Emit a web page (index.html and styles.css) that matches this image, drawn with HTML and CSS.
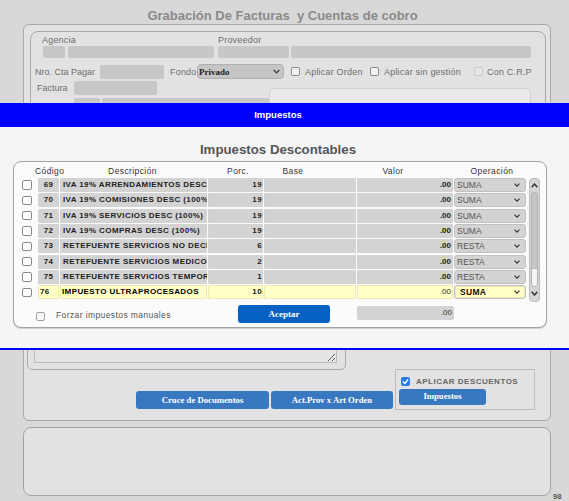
FILE: index.html
```html
<!DOCTYPE html>
<html lang="es">
<head>
<meta charset="utf-8">
<title>Grabación De Facturas</title>
<link rel="stylesheet" href="styles.css">
</head>
<body>
<div class="page">
  <div class="title">Grabación De Facturas&nbsp; y Cuentas de cobro</div>
  <div class="panel">
    <div class="fs1">
      <div class="lblrow"><span class="lbl-ag">Agencia</span><span class="lbl-pr">Proveedor</span></div>
      <div class="inrow"><span class="in in-ag1"></span><span class="in in-ag2"></span><span class="in in-pr1"></span><span class="in in-pr2"></span></div>
      <div class="row2">
        <span class="lbl w-nro">Nro. Cta Pagar</span><span class="in in-nro"></span>
        <span class="lbl w-fondo">Fondo</span>
        <span class="sel-privado">Privado<svg class="chev7" width="7" height="5" viewBox="0 0 7 5"><path d="M0.6 0.8 L3.5 3.8 L6.4 0.8" fill="none" stroke="#333" stroke-width="1.2"/></svg></span>
        <span class="chk chk1"></span><span class="lbl w-ord">Aplicar Orden</span>
        <span class="chk"></span><span class="lbl w-sin">Aplicar sin gestión</span>
        <span class="chk chk-dis"></span><span class="lbl lbl-dis">Con C.R.P</span>
      </div>
      <div class="row3">
        <div class="r3left">
          <div class="factrow"><span class="lbl w-fact">Factura</span><span class="in in-fact"></span></div>
          <div class="row4"><span class="in in-r4a"></span><span class="in in-r4b"></span></div>
        </div>
        <div class="rbox"></div>
      </div>
    </div>
    <div class="lower">
      <div class="fs2"><textarea class="obs"></textarea></div>
      <button class="btn btn-cruce">Cruce de Documentos</button>
      <button class="btn btn-act">Act.Prov x Art Orden</button>
      <div class="descbox">
        <div class="descrow">
          <span class="chk-on"><svg width="9" height="9" viewBox="0 0 9 9"><path d="M1.9 4.6 L3.8 6.5 L7.1 2.5" fill="none" stroke="#fff" stroke-width="1.4"/></svg></span>
          <span class="desclbl">APLICAR DESCUENTOS</span>
        </div>
        <button class="btn btn-imp">Impuestos</button>
      </div>
    </div>
  </div>
  <div class="bottomrow"><div class="panel2"></div><span class="pagenum">98</span></div>
</div>

<div class="modal">
  <div class="mhead">Impuestos</div>
  <div class="mbody">
    <h2 class="mtitle">Impuestos Descontables</h2>
    <div class="taxbox">
      <div class="thead">
        <span class="h-cod">Código</span>
        <span class="h-desc">Descripción</span>
        <span class="h-porc">Porc.</span>
        <span class="h-base">Base</span>
        <span class="h-val">Valor</span>
        <span class="h-op">Operación</span>
      </div>
      <div class="tbody">
        <div class="rows">
          <div class="row"><span class="c-chk"><span class="cb"></span></span><span class="cell c-cod">69</span><span class="cell c-desc">IVA 19% ARRENDAMIENTOS DESC (100%)</span><span class="cell c-porc">19</span><span class="cell c-base"></span><span class="cell c-val">.00</span><span class="cell c-sel">SUMA<svg width="6" height="4" viewBox="0 0 6 4"><path d="M0.5 0.6 L3 3.2 L5.5 0.6" fill="none" stroke="#333" stroke-width="1.1"/></svg></span></div>
          <div class="row"><span class="c-chk"><span class="cb"></span></span><span class="cell c-cod">70</span><span class="cell c-desc">IVA 19% COMISIONES DESC (100%)</span><span class="cell c-porc">19</span><span class="cell c-base"></span><span class="cell c-val">.00</span><span class="cell c-sel">SUMA<svg width="6" height="4" viewBox="0 0 6 4"><path d="M0.5 0.6 L3 3.2 L5.5 0.6" fill="none" stroke="#333" stroke-width="1.1"/></svg></span></div>
          <div class="row"><span class="c-chk"><span class="cb"></span></span><span class="cell c-cod">71</span><span class="cell c-desc">IVA 19% SERVICIOS DESC (100%)</span><span class="cell c-porc">19</span><span class="cell c-base"></span><span class="cell c-val">.00</span><span class="cell c-sel">SUMA<svg width="6" height="4" viewBox="0 0 6 4"><path d="M0.5 0.6 L3 3.2 L5.5 0.6" fill="none" stroke="#333" stroke-width="1.1"/></svg></span></div>
          <div class="row"><span class="c-chk"><span class="cb"></span></span><span class="cell c-cod">72</span><span class="cell c-desc">IVA 19% COMPRAS DESC (100%)</span><span class="cell c-porc">19</span><span class="cell c-base"></span><span class="cell c-val">.00</span><span class="cell c-sel">SUMA<svg width="6" height="4" viewBox="0 0 6 4"><path d="M0.5 0.6 L3 3.2 L5.5 0.6" fill="none" stroke="#333" stroke-width="1.1"/></svg></span></div>
          <div class="row"><span class="c-chk"><span class="cb"></span></span><span class="cell c-cod">73</span><span class="cell c-desc">RETEFUENTE SERVICIOS NO DECLARANTES</span><span class="cell c-porc">6</span><span class="cell c-base"></span><span class="cell c-val">.00</span><span class="cell c-sel">RESTA<svg width="6" height="4" viewBox="0 0 6 4"><path d="M0.5 0.6 L3 3.2 L5.5 0.6" fill="none" stroke="#333" stroke-width="1.1"/></svg></span></div>
          <div class="row"><span class="c-chk"><span class="cb"></span></span><span class="cell c-cod">74</span><span class="cell c-desc">RETEFUENTE SERVICIOS MEDICOS</span><span class="cell c-porc">2</span><span class="cell c-base"></span><span class="cell c-val">.00</span><span class="cell c-sel">RESTA<svg width="6" height="4" viewBox="0 0 6 4"><path d="M0.5 0.6 L3 3.2 L5.5 0.6" fill="none" stroke="#333" stroke-width="1.1"/></svg></span></div>
          <div class="row"><span class="c-chk"><span class="cb"></span></span><span class="cell c-cod">75</span><span class="cell c-desc">RETEFUENTE SERVICIOS TEMPORALES</span><span class="cell c-porc">1</span><span class="cell c-base"></span><span class="cell c-val">.00</span><span class="cell c-sel">RESTA<svg width="6" height="4" viewBox="0 0 6 4"><path d="M0.5 0.6 L3 3.2 L5.5 0.6" fill="none" stroke="#333" stroke-width="1.1"/></svg></span></div>
          <div class="row hl"><span class="c-chk"><span class="cb"></span></span><span class="cell c-cod">76</span><span class="cell c-desc">IMPUESTO ULTRAPROCESADOS</span><span class="cell c-porc">10</span><span class="cell c-base"></span><span class="cell c-val">.00</span><span class="cell c-sel">SUMA<svg width="6" height="4" viewBox="0 0 6 4"><path d="M0.5 0.6 L3 3.2 L5.5 0.6" fill="none" stroke="#333" stroke-width="1.1"/></svg></span></div>
        </div>
        <div class="sbar">
          <svg class="sb-up" width="7" height="5" viewBox="0 0 7 5"><path d="M0.7 4.2 L3.5 1 L6.3 4.2" fill="none" stroke="#333" stroke-width="1.5"/></svg>
          <div class="sb-track"><div class="sb-thumb"></div></div>
          <svg class="sb-down" width="7" height="5" viewBox="0 0 7 5"><path d="M0.7 0.8 L3.5 4 L6.3 0.8" fill="none" stroke="#333" stroke-width="1.5"/></svg>
        </div>
      </div>
      <div class="tfoot">
        <div class="fleft"><span class="fchk"></span><span class="flbl">Forzar impuestos manuales</span></div>
        <button class="btn btn-ok">Aceptar</button>
        <div class="ftot">.00</div>
      </div>
    </div>
  </div>
</div>
</body>
</html>
```

FILE: styles.css
```css
body {
  margin: 0;
  width: 569px;
  height: 501px;
  overflow: hidden;
  position: relative;
  background: #d8d8d8;
  font-family: "Liberation Sans", Arial, sans-serif;
}

.page { padding-top: 8px; }

.title {
  font-size: 13px;
  font-weight: bold;
  color: #8a8a8a;
  line-height: 15px;
  height: 15px;
  text-align: center;
  padding-right: 4px;
  margin-bottom: 1px;
}

.panel {
  box-sizing: border-box;
  margin-left: 23px;
  width: 528px;
  height: 397px;
  border: 1px solid #a8a8a8;
  border-radius: 6px;
  background: #e2e2e2;
  padding: 6px 4px 10px 6px;
  display: flex;
  flex-direction: column;
}

.fs1 {
  box-sizing: border-box;
  height: 170px;
  border: 1px solid #a9a9a9;
  border-radius: 8px;
  padding-top: 3px;
}

.lblrow {
  display: flex;
  height: 11px;
  line-height: 11px;
  font-size: 9px;
  color: #6e6e6e;
  letter-spacing: 0.2px;
  padding-left: 11px;
}
.lbl-ag { width: 176px; }

.inrow { display: flex; height: 12px; padding-left: 12px; }
.in { display: block; background: #c7c7c7; border-radius: 2px; }
.in-ag1 { width: 22px; }
.in-ag2 { width: 146px; margin-left: 3px; }
.in-pr1 { width: 71px; margin-left: 4px; }
.in-pr2 { width: 240px; margin-left: 2px; }

.row2 {
  display: flex;
  align-items: center;
  height: 15px;
  margin-top: 6px;
  font-size: 9px;
  color: #6e6e6e;
}
.lbl { white-space: nowrap; }
.row2 .lbl { letter-spacing: 0.2px; }
.w-nro { margin-left: 4px; width: 65px; letter-spacing: 0 !important; }
.in-nro { width: 64px; height: 14px; }
.w-fondo { margin-left: 6px; width: 27px; }
.sel-privado {
  box-sizing: border-box;
  width: 87px;
  height: 15px;
  background: #c5c5c5;
  border: 1px solid #b0b0b0;
  border-radius: 4px;
  display: flex;
  align-items: center;
  justify-content: space-between;
  padding: 0 3px 0 1px;
  font-family: "Liberation Serif", "Times New Roman", serif;
  font-weight: bold;
  font-size: 9px;
  color: #222;
}
.chk {
  box-sizing: border-box;
  width: 9px;
  height: 9px;
  border: 1px solid #8c8c8c;
  border-radius: 2px;
  background: #f2f2f2;
}
.chk1 { margin-left: 7px; }
.w-ord { margin-left: 5px; width: 65px; }
.w-sin { margin-left: 5px; width: 90px; }
.chk-dis { border-color: #cdcdcd; background: #e6e6e6; }
.lbl-dis { margin-left: 4px; }

.row3 { display: flex; margin-top: 2px; }
.r3left { width: 238px; }
.factrow { display: flex; align-items: center; height: 14px; font-size: 9px; color: #6e6e6e; }
.w-fact { margin-left: 6px; width: 37px; }
.in-fact { width: 83px; height: 14px; }
.row4 { display: flex; margin-top: 3px; padding-left: 43px; }
.in-r4a { width: 26px; height: 14px; }
.in-r4b { width: 167px; height: 14px; margin-left: 2px; }
.rbox {
  box-sizing: border-box;
  margin-top: 7px;
  width: 262px;
  height: 90px;
  border: 1px solid #cfcfcf;
  border-radius: 4px;
  background: #e9e9e9;
}

.lower {
  margin-top: auto;
  margin-left: -3px;
  display: grid;
  grid-template-columns: 107px 133px 122px 140px;
  grid-template-rows: auto 41px;
  column-gap: 2px;
}
.fs2 {
  grid-column: 1 / 4;
  grid-row: 1;
  box-sizing: border-box;
  width: 319px;
  height: 150px;
  margin-bottom: -1px;
  border: 1px solid #a9a9a9;
  border-radius: 5px;
  padding: 6px 8px 6px 6px;
  display: flex;
}
.obs {
  flex: 1;
  box-sizing: border-box;
  margin: 0;
  border: 1px solid #bcbcbc;
  background: #e4e4e4;
  resize: both;
  outline: none;
}

.btn {
  display: block;
  border: 0;
  padding: 0;
  border-radius: 3px;
  background: #3878c0;
  color: #fff;
  font-family: "Liberation Serif", "Times New Roman", serif;
  font-weight: bold;
  font-size: 8.7px;
  text-align: center;
}
.btn-cruce { grid-column: 2; grid-row: 2; align-self: end; height: 18px; margin-bottom: 1px; }
.btn-act { grid-column: 3; grid-row: 2; align-self: end; height: 18px; margin-bottom: 1px; }

.descbox {
  grid-column: 4;
  grid-row: 2;
  box-sizing: border-box;
  border: 1px solid #bdbdbd;
  padding: 7px 0 0 5px;
}
.descrow { display: flex; align-items: center; height: 9px; }
.chk-on {
  display: block;
  width: 9px;
  height: 9px;
  background: #2a7be4;
  border-radius: 2px;
}
.chk-on svg { display: block; }
.desclbl {
  margin-left: 6px;
  font-size: 8px;
  font-weight: bold;
  letter-spacing: 0.5px;
  color: #676767;
  line-height: 9px;
}
.btn-imp { margin-top: 3px; margin-left: -2px; width: 87px; height: 16px; padding-bottom: 2px; }

.bottomrow { display: flex; align-items: flex-end; margin-top: 6px; margin-left: 23px; }
.panel2 {
  box-sizing: border-box;
  width: 528px;
  height: 69px;
  border: 1.5px solid #a4a4a4;
  border-radius: 8px;
  background: #e2e2e2;
}
.pagenum {
  margin-left: 2px;
  margin-bottom: -5px;
  font-size: 7.5px;
  font-weight: bold;
  color: #555;
  line-height: 8px;
}

/* modal */
.modal {
  position: absolute;
  left: 0;
  top: 103px;
  width: 569px;
}
.mhead {
  height: 24px;
  background: #0000ff;
  color: #fff;
  font-weight: bold;
  font-size: 9.5px;
  line-height: 24px;
  text-align: center;
  padding-right: 13px;
}
.mbody {
  box-sizing: border-box;
  height: 223px;
  background: #f5f5f5;
  border-bottom: 2px solid #0000ff;
  padding-top: 15px;
}
.mtitle {
  margin: 0;
  font-size: 13.25px;
  line-height: 16px;
  color: #555;
  text-align: center;
  padding-right: 13px;
}
.taxbox {
  box-sizing: border-box;
  margin: 3px 0 0 13px;
  width: 534px;
  height: 167px;
  border: 1px solid #a3a3a3;
  border-radius: 8px;
  background: #fbfbfb;
  box-shadow: 0 1px 0 #cfcfcf;
  padding-top: 4px;
}
.thead {
  display: flex;
  height: 10px;
  line-height: 10px;
  font-size: 8.5px;
  letter-spacing: 0.4px;
  color: #333;
  padding-left: 21px;
  margin-bottom: 2px;
  white-space: nowrap;
}
.h-cod { width: 45px; }
.h-desc { width: 105px; text-align: center; }
.h-porc { margin-left: 30px; width: 46px; text-align: center; }
.h-base { width: 64px; text-align: center; }
.h-val { width: 136px; text-align: center; }
.h-op { width: 62px; text-align: center; }

.tbody { display: flex; }
.rows { width: 512px; display: flex; flex-direction: column; gap: 1.33px; }
.row {
  display: grid;
  grid-template-columns: 23px 21px 147px 55px 92px 96px 72px;
  column-gap: 1px;
  height: 14px;
}
.c-chk { display: flex; align-items: center; }
.cb {
  box-sizing: border-box;
  margin-left: 8px;
  width: 9.5px;
  height: 9.5px;
  border: 1px solid #8a8a8a;
  border-radius: 2px;
  background: #fff;
}
.cell {
  box-sizing: border-box;
  background: #d3d3d3;
  border-radius: 1px;
  font-size: 8px;
  font-weight: bold;
  letter-spacing: 0.4px;
  color: #222;
  line-height: 14px;
  white-space: nowrap;
  overflow: hidden;
}
.c-cod { text-align: center; }
.c-desc { padding-left: 3px; }
.c-porc { text-align: right; padding-right: 1px; }
.c-val { text-align: right; padding-right: 2px; letter-spacing: 0; }
.c-sel {
  display: flex;
  align-items: center;
  justify-content: space-between;
  border: 1px solid #c0c0c0;
  border-radius: 3px;
  padding: 0 5px 0 2px;
  font-weight: normal;
  font-size: 8.5px;
  letter-spacing: 0;
  color: #555;
}
.row.hl .cell { background: #ffffc6; box-shadow: inset 0 0 0 1px #ecebb4; }
.row.hl .c-cod { text-align: left; padding-left: 2px; }
.row.hl .c-desc { padding-left: 2px; color: #000; }
.row.hl .c-val { font-weight: normal; color: #333; }
.row.hl .c-sel { font-weight: bold; color: #111; padding-left: 5px; letter-spacing: 0.3px; }

.sbar {
  box-sizing: border-box;
  margin-left: 3px;
  width: 11px;
  height: 124px;
  border: 1px solid #bdbdbd;
  border-radius: 4px;
  background: #d6d6d6;
  display: flex;
  flex-direction: column;
  align-items: center;
}
.sb-up { display: block; margin-top: 4px; }
.sb-track {
  box-sizing: border-box;
  margin-top: 4px;
  width: 7px;
  height: 95px;
  border: 1px solid #b2b2b2;
  border-radius: 4px;
  background: #c6c6c6;
  display: flex;
  flex-direction: column;
  justify-content: flex-end;
  overflow: hidden;
}
.sb-thumb { height: 17px; background: #f5f5f5; border-top: 1px solid #bbb; }
.sb-down { display: block; margin-top: 4px; }

.tfoot { display: flex; align-items: flex-start; margin-top: 3px; }
.fleft { width: 224px; display: flex; align-items: flex-start; }
.fchk {
  box-sizing: border-box;
  margin: 7px 0 0 22px;
  width: 9px;
  height: 9px;
  border: 1px solid #a0a0a0;
  border-radius: 2px;
  background: #f8f8f8;
}
.flbl {
  margin: 5px 0 0 11px;
  font-size: 8.5px;
  letter-spacing: 0.4px;
  color: #555;
  line-height: 10px;
  white-space: nowrap;
}
.btn-ok { width: 92px; height: 18px; background: #0760c4; font-size: 9px; }
.ftot {
  box-sizing: border-box;
  margin: 1px 0 0 27px;
  width: 97px;
  height: 14px;
  background: #d3d3d3;
  border-radius: 2px;
  text-align: right;
  padding-right: 2px;
  font-size: 8px;
  color: #333;
  line-height: 14px;
}
```
